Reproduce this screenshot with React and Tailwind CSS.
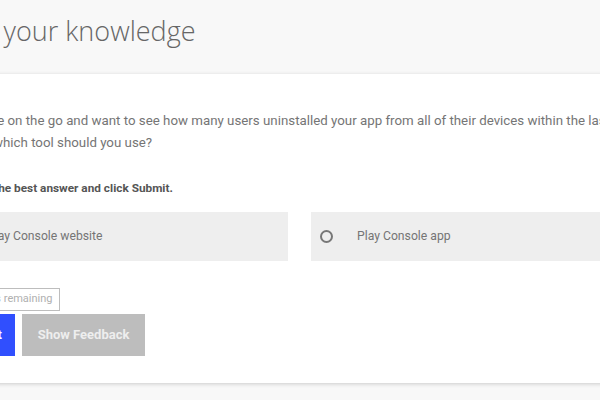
import React from "react";

export default function App() {
  return (
    <div className="w-[600px] h-[400px] overflow-hidden bg-[#f8f8f8] font-['Roboto',sans-serif]">
      <div className="w-[760px] -ml-[80px]">
        {/* Heading */}
        <div className="h-[74px] pl-[26px] pt-[13px]">
          <h1 className="text-[27px] leading-[36px] font-light text-[#666] font-['Open_Sans',sans-serif]">
            Test your knowledge
          </h1>
        </div>

        {/* Card */}
        <div className="bg-white shadow-[0_1px_4px_rgba(0,0,0,0.18)] h-[309px] pl-[21px] pt-[36px]">
          <div className="pl-[52px] text-[13.3px] leading-[22px] text-[#757575] whitespace-nowrap">
            <div className="-ml-[25px]">
              You're on the go and want to see how many users uninstalled your app from all of their devices within the last 30 days,
            </div>
            <div>which tool should you use?</div>
          </div>

          <p className="pl-[17px] mt-[26px] text-[11.8px] leading-[16px] font-bold text-[#555]">
            Select the best answer and click Submit.
          </p>

          <div className="mt-[16px] flex gap-[23px]">
            {["Play Console website", "Play Console app"].map((label) => (
              <div key={label} className="w-[347px] h-[49px] shrink-0 bg-[#eeeeee] flex items-center pl-[9px]">
                <span className="w-[13px] h-[13px] shrink-0 rounded-full border-2 border-[#777] mr-[24px]" />
                <span className="text-[12.2px] text-[#757575]">{label}</span>
              </div>
            ))}
          </div>

          <div className="mt-[27px] inline-flex items-center h-[23px] px-[6px] border-[1.5px] border-[#bdbdbd] text-[11px] text-[#b0b0b0]">
            2 attempts remaining
          </div>

          <div className="mt-[3px] flex gap-[7px]">
            <button className="h-[42px] w-[74px] bg-[#304ffe] text-white text-[13px] font-bold text-right pr-[13px]">
              Submit
            </button>
            <button className="h-[42px] w-[123px] bg-[#bdbdbd] text-[#eeeeee] text-[13px] font-bold">
              Show Feedback
            </button>
          </div>
        </div>
      </div>
    </div>
  );
}
